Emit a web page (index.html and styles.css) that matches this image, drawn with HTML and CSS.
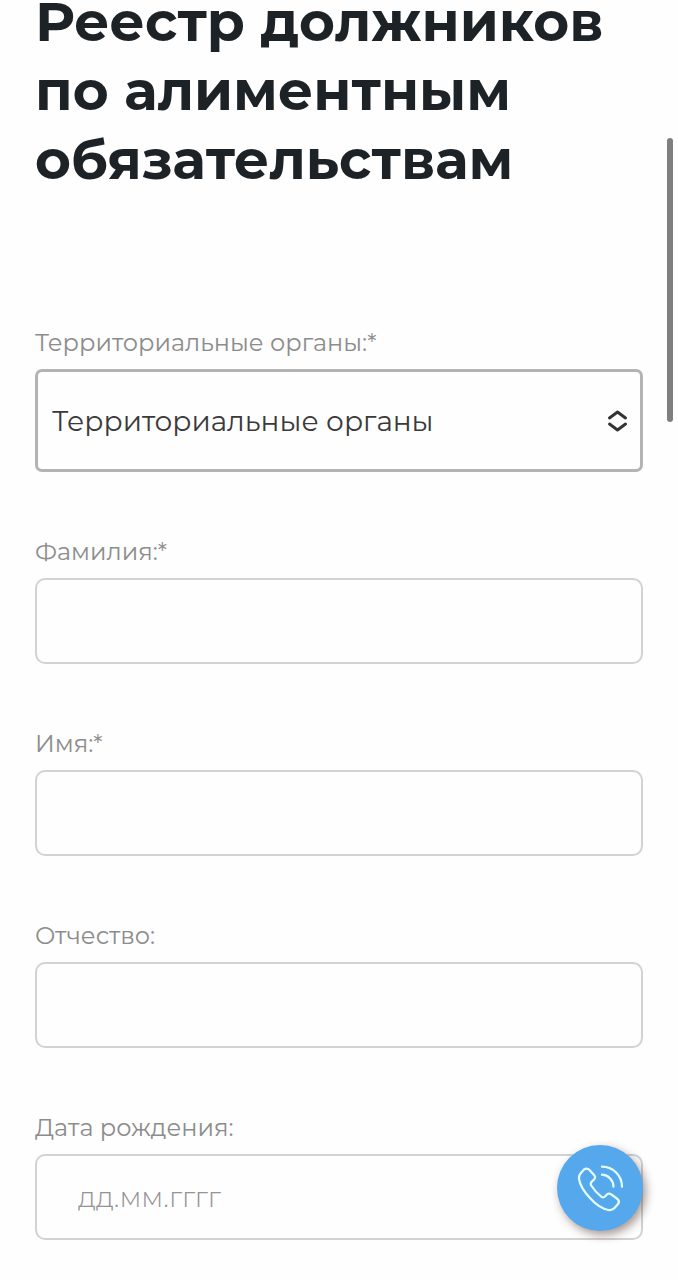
FILE: index.html
```html
<!DOCTYPE html>
<html lang="ru">
<head>
  <meta charset="UTF-8" />
  <meta name="viewport" content="width=device-width, initial-scale=1.0" />
  <title>Реестр должников по алиментным обязательствам</title>
  <link rel="stylesheet" href="styles.css">
</head>
<body>
  <main>
    <h1>Реестр должников по алиментным обязательствам</h1>

    <form class="search-form">
      <div class="field">
        <label for="organ">Территориальные органы:*</label>
        <div class="select-wrap">
          <select id="organ" required>
            <option value="">Территориальные органы</option>
          </select>
          <svg class="select-arrows" viewBox="0 0 20 22" aria-hidden="true">
            <path d="M2.500 8 10.500 2l8 6M2.500 14l8 6 8-6" />
          </svg>
        </div>
      </div>

      <div class="field">
        <label for="surname">Фамилия:*</label>
        <input type="text" id="surname" required />
      </div>

      <div class="field">
        <label for="name">Имя:*</label>
        <input type="text" id="name" required />
      </div>

      <div class="field">
        <label for="patronymic">Отчество:</label>
        <input type="text" id="patronymic" />
      </div>

      <div class="field">
        <label for="birthday">Дата рождения:</label>
        <input type="text" id="birthday" class="date" placeholder="дд.мм.гггг" />
      </div>
    </form>
  </main>

  <button type="button" class="call-button" aria-label="Позвонить">
    <svg viewBox="0 0 86 86" aria-hidden="true">
      <path d="M27 24.5q3-2 5.5.5l5 5.500q1.500 2-.5 4l-2.500 2.500q-1.500 1.800-.3 3.500 4.500 7 10.300 11.300 1.800 1.200 3.500-.3l2-2.200q2-1.500 4.200 0l6.300 4.700q2.500 2.200.5 5l-3.500 4q-2.500 2.500-6 2-9-1.500-18.500-12Q23.500 43 22 34q-.5-3 1.500-5.500z" />
      <path d="M45 21.700a20 20 0 0 1 20 20M45 29.700a12 12 0 0 1 11.500 12" />
    </svg>
  </button>

  <div class="scroll-thumb"></div>
</body>
</html>
```

FILE: styles.css
```css
* {
  box-sizing: border-box;
}

body {
  margin: 0;
  background-color: #fefefe;
  font-family: "Montserrat", "Inter", sans-serif;
  color: #1d2226;
}

main {
  padding: 0 35px;
}

h1 {
  margin: -13px 0 135px;
  font-size: 55px;
  font-weight: 700;
  line-height: 69px;
}

.search-form {
  display: flex;
  flex-direction: column;
  gap: 66px;
}

.field {
  display: flex;
  flex-direction: column;
  gap: 12px;
}

label {
  font-size: 24px;
  line-height: 28px;
  color: #8c8c8c;
}

input,
select {
  width: 100%;
  height: 86px;
  padding: 0 16px;
  border: 2px solid #d2d2d2;
  border-radius: 10px;
  background-color: #fefefe;
  font-family: inherit;
  font-size: 28px;
  color: #3a3a3a;
}

.select-wrap {
  position: relative;
}

select {
  display: block;
  appearance: none;
  height: 103px;
  padding: 0 14px;
  border: 3px solid #b3b3b3;
  border-radius: 7px;
}

.select-arrows {
  position: absolute;
  top: 41px;
  right: 16px;
  width: 20px;
  height: 22px;
  fill: none;
  stroke: #333333;
  stroke-width: 2.9;
  stroke-linecap: round;
  stroke-linejoin: round;
  pointer-events: none;
}

.date {
  padding: 0 41px;
}

.date::placeholder {
  font-weight: 300;
  color: #949494;
}

.call-button {
  position: fixed;
  right: 35px;
  bottom: 49px;
  width: 86px;
  height: 86px;
  padding: 0;
  border: none;
  border-radius: 50%;
  background-color: #55a8ec;
  box-shadow: 3px 4px 10px rgba(60, 30, 20, 0.45);
  cursor: pointer;
}

.call-button svg {
  display: block;
  fill: none;
  stroke: #e6ffff;
  stroke-width: 2.2;
  stroke-linecap: round;
  stroke-linejoin: round;
}

.scroll-thumb {
  position: fixed;
  top: 138px;
  right: 5px;
  width: 6px;
  height: 284px;
  border-radius: 3px;
  background-color: #7f7f7f;
}
```
